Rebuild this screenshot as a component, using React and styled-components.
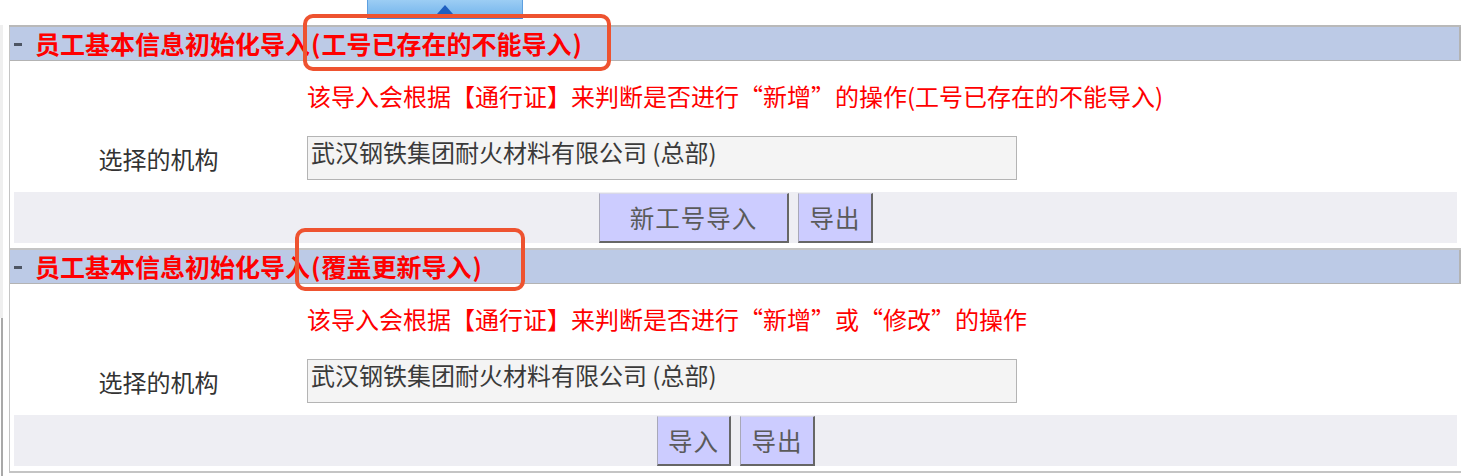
import React from "react";
import styled, { createGlobalStyle } from "styled-components";

const Global = createGlobalStyle`
  html, body { margin: 0; padding: 0; background: #fff; }
  body { font-family: "Noto Sans CJK SC", "Noto Sans", sans-serif; }
  * { box-sizing: border-box; }
`;

const Page = styled.div`
  position: relative;
  width: 1476px;
  height: 476px;
  overflow: hidden;
`;

const TopStrip = styled.div`
  height: 25px;
  display: flex;
  align-items: flex-start;
`;

const Handle = styled.div`
  margin-left: 367px;
  width: 156px;
  height: 19px;
  background: linear-gradient(#9ccdf4, #74b5ec);
  border-left: 1px solid #5d9fe0;
  border-right: 1px solid #5d9fe0;
  border-bottom: 2px solid #4a86d2;
  display: flex;
  justify-content: center;
  padding-top: 5px;
`;

const Frame = styled.div`
  display: flex;
  height: 451px;
`;

const Rail = styled.div`
  width: 3px;
  display: flex;
  flex-direction: column;
`;

const RailTop = styled.div`
  height: 293px;
  background: #efefef;
`;

const RailBottom = styled.div`
  flex: 1;
  margin-left: 1px;
  width: 2px;
  background: #a9a9a9;
`;

const Panels = styled.div`
  margin-left: 6px;
  width: 1452px;
  border-top: 2px solid #b9b9b9;
  align-self: flex-start;
`;

const Panel = styled.section`
  border-left: 1px solid #c4c4c4;
  border-bottom: 2px solid #c4c4c4;
  padding-bottom: 5px;
`;

const Header = styled.div`
  height: 34px;
  background: #bccae6;
  border-right: 2px solid #b3b3b3;
  border-bottom: 1px solid #b3b3b3;
  display: flex;
  align-items: center;
  padding-left: 4px;
  font-size: 25px;
  font-weight: 700;
  line-height: 33px;
  white-space: nowrap;
`;

const Dash = styled.span`
  display: inline-block;
  width: 8px;
  height: 3px;
  background: #4d5564;
  margin-right: 13px;
  margin-top: 2px;
`;

const Title = styled.span`
  color: #ff0000;
`;

const Paren = styled.span`
  margin: 0 1px;
`;

const FormGrid = styled.div`
  display: grid;
  grid-template-columns: 297px 1fr;
`;

const Note = styled.div`
  grid-column: 2;
  padding-top: 22px;
  font-size: 24px;
  line-height: 26px;
  color: #ff0000;
  white-space: nowrap;
`;

const Label = styled.div`
  grid-column: 1;
  margin-top: 27px;
  display: flex;
  align-items: center;
  justify-content: center;
  font-size: 24px;
  color: #333;
`;

const OrgBox = styled.div`
  grid-column: 2;
  margin-top: 27px;
  width: 710px;
  height: 44px;
  border: 1px solid #b4b4b4;
  background: #f4f4f4;
  padding: 1px 3px;
  font-size: 24px;
  line-height: 28px;
  color: #3a3a3a;
  white-space: nowrap;
`;

const ButtonBar = styled.div`
  margin: 12px 4px 0 4px;
  height: 51px;
  padding-top: 1px;
  background: #eeeef3;
  display: flex;
  justify-content: center;
  gap: 9px;
  padding-left: 1px;
`;

const Button = styled.button`
  width: ${(p) => p.$w}px;
  height: 50px;
  background: #ccccff;
  border-top: 1px solid #d8d8e8;
  border-left: 1px solid #a8a8b8;
  border-right: 2px solid #666;
  border-bottom: 2px solid #666;
  padding: 0;
  font-family: "Noto Sans CJK SC", "Noto Sans", sans-serif;
  font-size: 24.5px;
  color: #5a5a5a;
  letter-spacing: 1px;
  cursor: pointer;
`;

const Callout = styled.div`
  position: absolute;
  left: ${(p) => p.$x}px;
  top: ${(p) => p.$y}px;
  width: ${(p) => p.$w}px;
  height: ${(p) => p.$h}px;
  border: 4px solid #ee5330;
  border-radius: 10px;
  pointer-events: none;
`;

function ImportPanel({ mode, note, buttons }) {
  return (
    <Panel>
      <Header>
        <Dash />
        <Title>
          员工基本信息初始化导入<Paren>(</Paren>
          {mode}
          <Paren>)</Paren>
        </Title>
      </Header>
      <FormGrid>
        <Note>{note}</Note>
        <Label>选择的机构</Label>
        <OrgBox>武汉钢铁集团耐火材料有限公司 (总部)</OrgBox>
      </FormGrid>
      <ButtonBar>
        {buttons.map((b) => (
          <Button key={b.text} $w={b.w}>
            {b.text}
          </Button>
        ))}
      </ButtonBar>
    </Panel>
  );
}

export default function App() {
  return (
    <Page>
      <Global />
      <TopStrip>
        <Handle>
          <svg width="16" height="9" viewBox="0 0 16 9">
            <path d="M8 0 L16 9 L0 9 Z" fill="#1f5fbf" />
          </svg>
        </Handle>
      </TopStrip>
      <Frame>
        <Rail>
          <RailTop />
          <RailBottom />
        </Rail>
        <Panels>
          <ImportPanel
            mode="工号已存在的不能导入"
            note="该导入会根据【通行证】来判断是否进行“新增”的操作(工号已存在的不能导入)"
            buttons={[
              { text: "新工号导入", w: 190 },
              { text: "导出", w: 75 },
            ]}
          />
          <ImportPanel
            mode="覆盖更新导入"
            note="该导入会根据【通行证】来判断是否进行“新增”或“修改”的操作"
            buttons={[
              { text: "导入", w: 74 },
              { text: "导出", w: 75 },
            ]}
          />
        </Panels>
      </Frame>
      <Callout $x={303} $y={14} $w={308} $h={57} />
      <Callout $x={295} $y={228} $w={230} $h={63} />
    </Page>
  );
}
